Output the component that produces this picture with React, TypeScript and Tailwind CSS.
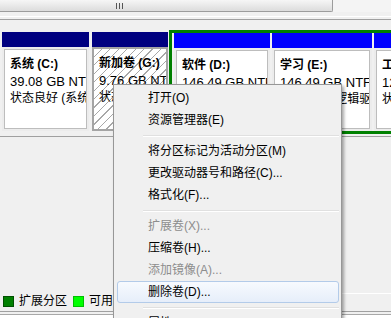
import React from 'react';

type Part = {
  name: string;
  size: string;
  status: string;
  width: string;
  bar: string;
  hatched?: boolean;
};

const primary: Part[] = [
  { name: '系统  (C:)', size: '39.08 GB NTFS', status: '状态良好 (系统, 启动, 页面文件, 活动, 故障转储)', width: 'w-[87px]', bar: 'bg-[#000080]' },
  { name: '新加卷  (G:)', size: '9.76 GB NTFS', status: '状态良好 (主分区)', width: 'w-[76px]', bar: 'bg-[#000080]', hatched: true },
];

const logical: Part[] = [
  { name: '软件  (D:)', size: '146.49 GB NTFS', status: '状态良好 (逻辑驱动器)', width: 'w-[96px]', bar: 'bg-[#0000ff]' },
  { name: '学习  (E:)', size: '146.49 GB NTFS', status: '状态良好 (逻辑驱动器)', width: 'w-[100px]', bar: 'bg-[#0000ff]' },
  { name: '工作  (F:)', size: '126.49 GB NTFS', status: '状态良好 (逻辑驱动器)', width: 'w-[100px]', bar: 'bg-[#0000ff]' },
];

type Item = { t: string; disabled?: boolean; hot?: boolean } | 'sep';

const menu: Item[] = [
  { t: '打开(O)' },
  { t: '资源管理器(E)' },
  'sep',
  { t: '将分区标记为活动分区(M)' },
  { t: '更改驱动器号和路径(C)...' },
  { t: '格式化(F)...' },
  'sep',
  { t: '扩展卷(X)...', disabled: true },
  { t: '压缩卷(H)...' },
  { t: '添加镜像(A)...', disabled: true },
  { t: '删除卷(D)...', hot: true },
  'sep',
  { t: '属性(P)' },
];

const Partition: React.FC<{ p: Part }> = ({ p }) => (
  <div className={`flex flex-col shrink-0 h-full ${p.width}`}>
    <div className={`h-[15px] shrink-0 ${p.bar}`} />
    <div className={`flex-1 p-[2px] ${p.hatched ? 'bg-[#a4a4a4]' : 'bg-[#ececec]'}`}>
      <div
        className={`h-full overflow-hidden whitespace-nowrap pl-[5px] pt-[6px] leading-[17px] text-[12px] text-black ${
          p.hatched
            ? 'bg-[repeating-linear-gradient(135deg,#ffffff_0px,#ffffff_5px,#a8a8a8_5px,#a8a8a8_6px)]'
            : 'bg-white border border-[#bdbdbd]'
        }`}
      >
        <div className="font-bold">{p.name}</div>
        <div className="text-[13px]">{p.size}</div>
        <div>{p.status}</div>
      </div>
    </div>
  </div>
);

export default function App() {
  return (
    <div className="relative h-[318px] w-[391px] overflow-hidden bg-[#f0f0f0] font-['Liberation_Sans','Noto_Sans_CJK_SC',sans-serif] flex flex-col">
      {/* horizontal scrollbar */}
      <div className="h-[12px] shrink-0 flex bg-[#f4f4f4]">
        <div className="w-[333px] h-full flex items-center rounded-br-[2px] border-b border-r border-[#9c9c9c] bg-gradient-to-b from-[#f6f6f6] to-[#dcdcdc]">
          <div className="ml-[116px] flex gap-[2px]">
            <span className="w-[1px] h-[6px] bg-[#555]" />
            <span className="w-[1px] h-[6px] bg-[#555]" />
            <span className="w-[1px] h-[6px] bg-[#555]" />
          </div>
        </div>
      </div>
      <div className="mt-[4px] h-[1px] shrink-0 bg-white" />
      <div className="mt-[2px] h-[1px] shrink-0 bg-[#a0a0a0]" />

      {/* disk row */}
      <div className="mt-[10px] h-[104px] shrink-0 flex items-start">
        <div className="ml-[2px] mt-[2px] h-[99px] flex gap-[3px]">
          {primary.map((p) => (
            <Partition key={p.name} p={p} />
          ))}
        </div>
        <div className="ml-[1px] flex-1 h-full border-[3px] border-r-0 border-[#008000] flex gap-[2px] pl-[2px] overflow-hidden">
          {logical.map((p) => (
            <Partition key={p.name} p={p} />
          ))}
        </div>
      </div>
      <div className="mt-[2px] h-[1px] shrink-0 bg-[#a0a0a0]" />

      <div className="flex-1" />

      {/* legend */}
      <div className="h-[16px] shrink-0 flex items-center text-[12px] text-black">
        <div className="flex items-center pl-[3px] gap-[5px] whitespace-nowrap">
          <span className="w-[11px] h-[11px] bg-[#008000] border border-[#005000]" />
          <span>扩展分区</span>
          <span className="ml-[1px] w-[11px] h-[11px] bg-[#00ff00] border border-[#00c000]" />
          <span>可用空间</span>
        </div>
        <div className="ml-[40px] flex-1 h-full border-t border-white" />
      </div>
      <div className="mt-[2px] h-[7px] shrink-0 border-t border-[#a0a0a0] bg-[#f0f0f0] pt-[2px]">
        <div className="h-full border-t border-[#a8a8a8] bg-white" />
      </div>

      {/* context menu */}
      <div className="absolute left-[113px] top-[84px] w-[229px] border border-[#979797] bg-[#f0f0f0] p-[2px] text-[12px] shadow-[2px_2px_3px_rgba(0,0,0,0.35)]">
        {menu.map((it, i) =>
          it === 'sep' ? (
            <div key={i} className="h-[9px] flex flex-col justify-center pl-[27px]">
              <div className="h-[1px] bg-[#e0e0e0]" />
              <div className="h-[1px] bg-white" />
            </div>
          ) : (
            <div
              key={i}
              className={`h-[22px] ml-[1px] flex items-center pl-[30px] rounded-[3px] border ${
                it.hot
                  ? 'border-[#b3cbe9] bg-gradient-to-b from-[#f7fafe] to-[#e6eefa]'
                  : 'border-transparent'
              } ${it.disabled ? 'text-[#8d8d8d]' : 'text-black'}`}
            >
              {it.t}
            </div>
          )
        )}
      </div>
    </div>
  );
}
